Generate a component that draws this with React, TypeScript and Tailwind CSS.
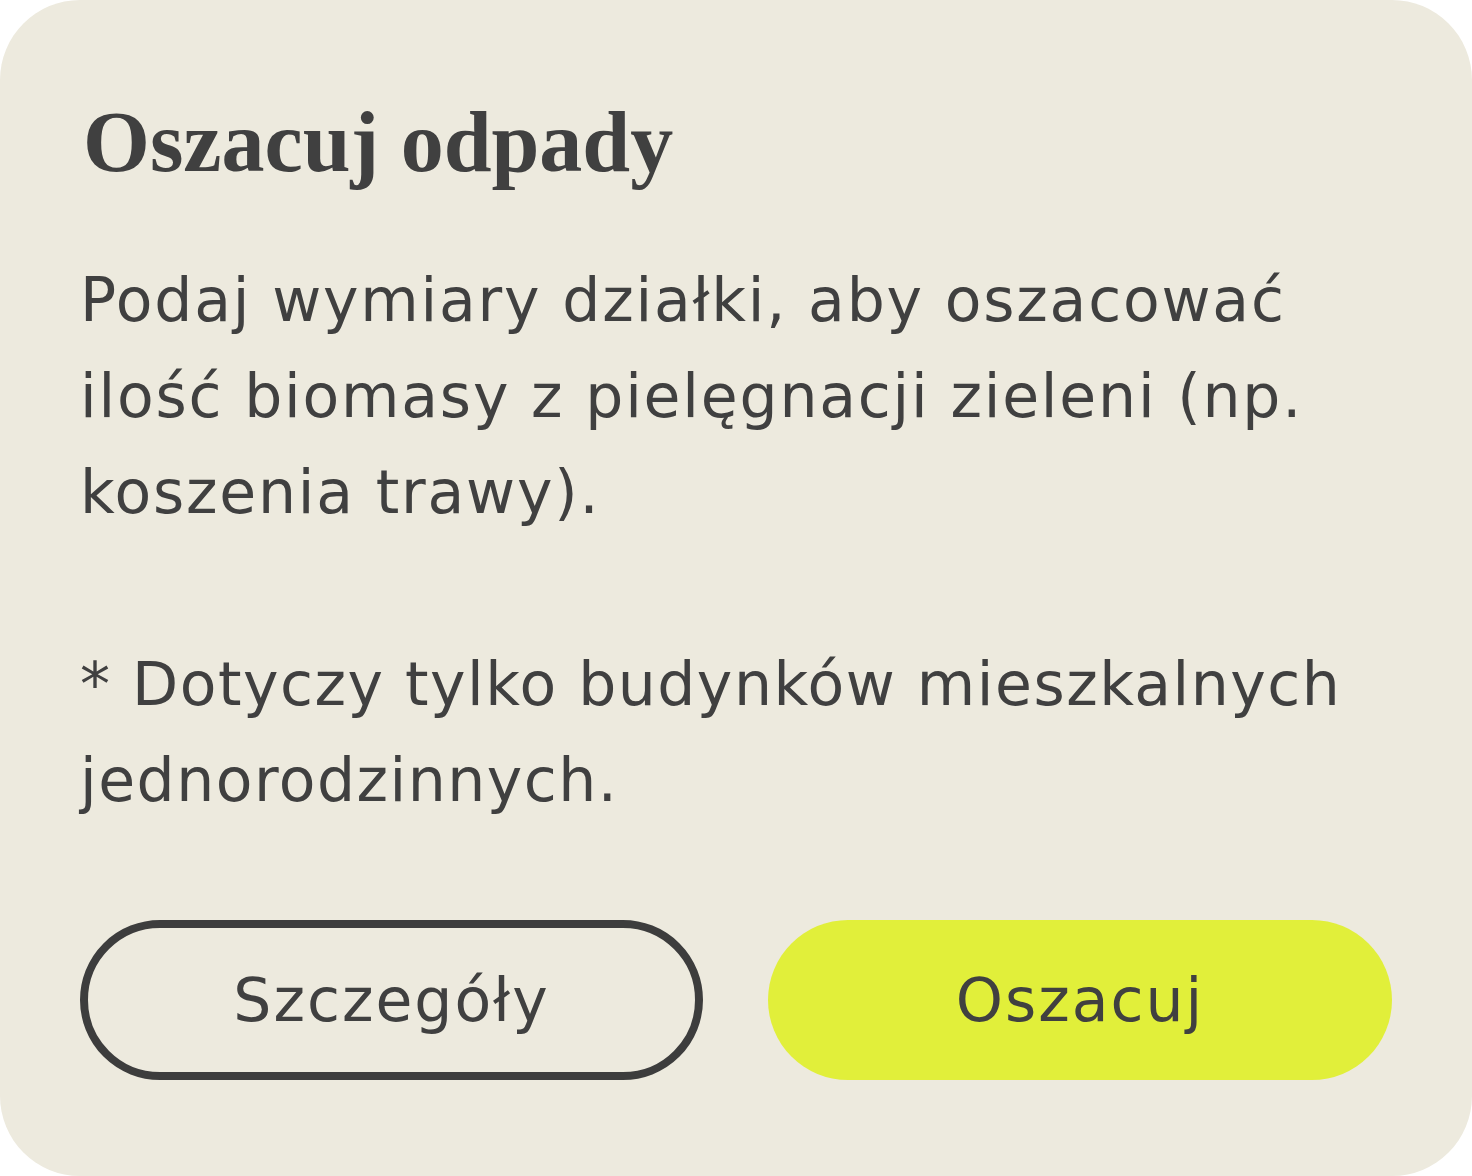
const body = "font-['DejaVu_Sans',sans-serif]";

export default function App() {
  return (
    <div className="h-[1176px] w-[1472px] bg-white">
      <section className="flex h-full w-full flex-col rounded-[80px] bg-[#edeade] px-20 pt-[95px] text-[#404040]">
        <h1 className="pl-[3px] font-['Liberation_Serif',serif] text-[86px] font-bold leading-[95px]">
          Oszacuj odpady
        </h1>

        <div className={`${body} mt-[62px] whitespace-nowrap text-[60px] leading-[96px]`}>
          <p className="tracking-[1.8px]">
            Podaj wymiary działki, aby oszacować
            <br />
            ilość biomasy z pielęgnacji zieleni (np.
            <br />
            koszenia trawy).
          </p>
          <p className="mt-[96px] tracking-[1.5px]">
            * Dotyczy tylko budynków mieszkalnych
            <br />
            jednorodzinnych.
          </p>
        </div>

        <div className={`${body} mt-[92px] flex gap-[65px] text-[60px] tracking-[2px]`}>
          <button
            type="button"
            className="flex h-[160px] w-[623px] shrink-0 items-center justify-center rounded-full border-[8px] border-[#3d3d3d]"
          >
            Szczegóły
          </button>
          <button
            type="button"
            className="flex h-[160px] w-[624px] shrink-0 items-center justify-center rounded-full bg-[#e1ef3a]"
          >
            Oszacuj
          </button>
        </div>
      </section>
    </div>
  );
}
